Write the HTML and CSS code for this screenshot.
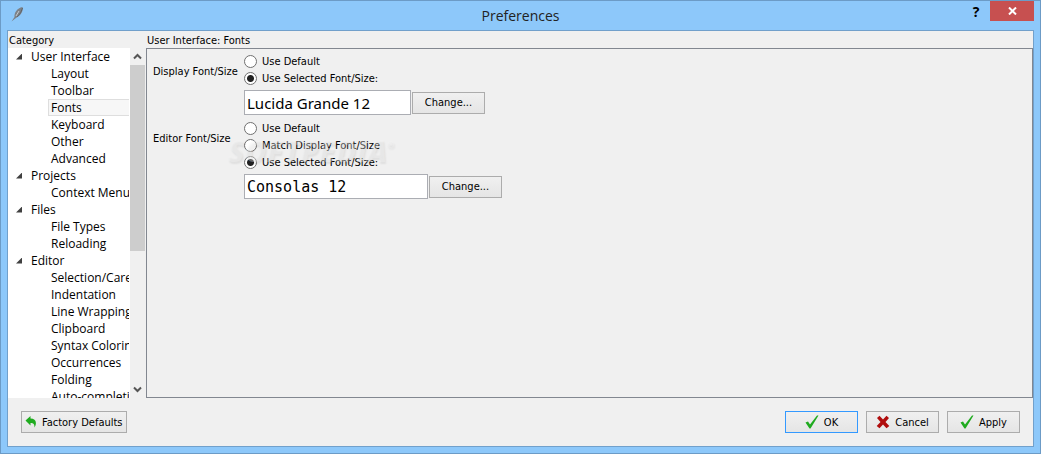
FILE: index.html
```html
<!DOCTYPE html>
<html lang="en">
<head>
    <meta charset="UTF-8">
    <meta name="viewport" content="width=device-width, initial-scale=1.0">
    <title>Preferences</title>
    <link rel="stylesheet" href="styles.css">
</head>
<body>
    <div class="window">
        <header class="titlebar">
            <svg class="app-icon" width="14" height="16" viewBox="0 0 14 16">
                <path d="M0.5 15.5 L3.5 11 C3 7 6 2 11.5 1 C12.5 5 9.5 10 5 12 Z" fill="#7d8288"/>
                <path d="M5 10 L8 5" fill="none" stroke="#c4c9cd" stroke-width="1"/>
                <path d="M6 11 C8 9 10 7 11.5 2" fill="none" stroke="#5d6268" stroke-width="1"/>
            </svg>
            <h1>Preferences</h1>
            <button class="help-button" type="button" aria-label="Help">?</button>
            <button class="close-button" type="button" aria-label="Close">
                <svg width="9" height="8" viewBox="0 0 9 8">
                    <path d="M1 0.5 L8 7.5 M8 0.5 L1 7.5" stroke="#fff" stroke-width="2"/>
                </svg>
            </button>
        </header>

        <form class="client">
            <div class="content">
                <nav class="sidebar">
                    <h2>Category</h2>
                    <div class="tree-box">
                        <ul class="tree">
                            <li>
                                <span class="group">User Interface</span>
                                <ul>
                                    <li><a href="#layout">Layout</a></li>
                                    <li><a href="#toolbar">Toolbar</a></li>
                                    <li><a class="selected" href="#fonts">Fonts</a></li>
                                    <li><a href="#keyboard">Keyboard</a></li>
                                    <li><a href="#other">Other</a></li>
                                    <li><a href="#advanced">Advanced</a></li>
                                </ul>
                            </li>
                            <li>
                                <span class="group">Projects</span>
                                <ul>
                                    <li><a href="#context-menu">Context Menu</a></li>
                                </ul>
                            </li>
                            <li>
                                <span class="group">Files</span>
                                <ul>
                                    <li><a href="#file-types">File Types</a></li>
                                    <li><a href="#reloading">Reloading</a></li>
                                </ul>
                            </li>
                            <li>
                                <span class="group">Editor</span>
                                <ul>
                                    <li><a href="#selection">Selection/Caret</a></li>
                                    <li><a href="#indentation">Indentation</a></li>
                                    <li><a href="#wrapping">Line Wrapping</a></li>
                                    <li><a href="#clipboard">Clipboard</a></li>
                                    <li><a href="#syntax">Syntax Coloring</a></li>
                                    <li><a href="#occurrences">Occurrences</a></li>
                                    <li><a href="#folding">Folding</a></li>
                                    <li><a href="#completion">Auto-completion</a></li>
                                </ul>
                            </li>
                        </ul>
                        <div class="scrollbar">
                            <button type="button" aria-label="Scroll up">
                                <svg width="9" height="7" viewBox="0 0 9 7"><path d="M1 5.5 L4.5 2 L8 5.5" fill="none" stroke="#555" stroke-width="2"/></svg>
                            </button>
                            <div class="track"><div class="thumb"></div></div>
                            <button type="button" aria-label="Scroll down">
                                <svg width="9" height="7" viewBox="0 0 9 7"><path d="M1 1.5 L4.5 5 L8 1.5" fill="none" stroke="#555" stroke-width="2"/></svg>
                            </button>
                        </div>
                    </div>
                </nav>

                <main class="page">
                    <h2>User Interface: Fonts</h2>
                    <div class="panel">
                        <div class="setting" role="group" aria-labelledby="display-label">
                            <span class="setting-name" id="display-label">Display Font/Size</span>
                            <div class="options">
                                <label><input type="radio" name="display">Use Default</label>
                                <label><input type="radio" name="display" checked>Use Selected Font/Size:</label>
                                <div class="font-row">
                                    <input class="font-field display-font" type="text" value="Lucida Grande 12" aria-label="Display font" readonly>
                                    <button class="button" type="button">Change...</button>
                                </div>
                            </div>
                        </div>
                        <div class="setting" role="group" aria-labelledby="editor-label">
                            <span class="setting-name" id="editor-label">Editor Font/Size</span>
                            <div class="options">
                                <label><input type="radio" name="editor">Use Default</label>
                                <label><input type="radio" name="editor">Match Display Font/Size</label>
                                <label><input type="radio" name="editor" checked>Use Selected Font/Size:</label>
                                <div class="font-row">
                                    <input class="font-field editor-font" type="text" value="Consolas 12" aria-label="Editor font" readonly>
                                    <button class="button" type="button">Change...</button>
                                </div>
                            </div>
                        </div>
                        <div class="watermark">SOFTPEDIA<sup>®</sup></div>
                    </div>
                </main>
            </div>

            <footer class="actions">
                <button class="button defaults" type="button">
                    <svg width="12" height="12" viewBox="0 0 12 12">
                        <path d="M0.5 4.5 L5.5 0 V2.5 C10.5 2.5 12.5 6 9.5 11.5 C9.5 8 8.5 7 5.5 7 V9.5 Z" fill="#1fab1f"/>
                    </svg>
                    Factory Defaults
                </button>
                <button class="button primary" type="button">
                    <svg width="14" height="14" viewBox="0 0 14 14"><path d="M0.5 7.5 L3 6.5 L5 9.5 L12 0.5 H13.5 L5.5 13.5 H4.5 Z" fill="#1fab1f"/></svg>
                    OK
                </button>
                <button class="button" type="button">
                    <svg width="14" height="14" viewBox="0 0 14 14"><path d="M1 3 L3.5 0.8 L7 4.5 L10.5 0.8 L13 3 L9.5 7 L13.3 11 L10.5 13.3 L7 9.5 L3.5 13.3 L0.7 11 L4.5 7 Z" fill="#b00d0d"/></svg>
                    Cancel
                </button>
                <button class="button" type="button">
                    <svg width="14" height="14" viewBox="0 0 14 14"><path d="M0.5 7.5 L3 6.5 L5 9.5 L12 0.5 H13.5 L5.5 13.5 H4.5 Z" fill="#1fab1f"/></svg>
                    Apply
                </button>
            </footer>
        </form>
    </div>
</body>
</html>
```
FILE: styles.css
```css
* {
    box-sizing: border-box;
}

body {
    margin: 0;
    font-family: "DejaVu Sans Condensed", "Noto Sans", sans-serif;
    font-size: 11px;
    color: #000;
}

button,
input {
    margin: 0;
    font: inherit;
    color: inherit;
}

h1,
h2 {
    margin: 0;
    font-weight: normal;
}

ul {
    margin: 0;
    padding: 0;
    list-style: none;
}

.window {
    display: flex;
    flex-direction: column;
    height: 100vh;
    padding: 0 6px 6px;
    background-color: #8dc8fa;
    border: 1px solid #6c9bc6;
}

/* Title bar */
.titlebar {
    display: grid;
    grid-template-columns: 72px 1fr 28px 44px;
    align-items: start;
    height: 29px;
}

.app-icon {
    margin: 5px 0 0 4px;
}

.titlebar h1 {
    font-family: "Open Sans", sans-serif;
    font-size: 14px;
    line-height: 29px;
    text-align: center;
    color: #222;
}

.titlebar button {
    padding: 0;
    border: none;
    height: 20px;
}

.help-button {
    background: none;
    font-family: "Open Sans", sans-serif;
    font-size: 14px;
    font-weight: bold;
}

.close-button {
    display: flex;
    align-items: center;
    justify-content: center;
    background-color: #c75050;
}

/* Client area */
.client {
    flex: 1;
    display: flex;
    flex-direction: column;
    min-height: 0;
    background-color: #f0f0f0;
    border: 1px solid #71a0cb;
}

.content {
    flex: 1;
    display: flex;
    min-height: 0;
}

.content h2 {
    height: 17px;
    padding-left: 1px;
    font-size: 11px;
    line-height: 19px;
}

.sidebar {
    display: flex;
    flex-direction: column;
    width: 138px;
}

.tree-box {
    flex: 1;
    display: flex;
    min-height: 0;
    padding-right: 1px;
}

.tree {
    flex: 1;
    min-width: 0;
    padding-right: 1px;
    overflow: hidden;
    background-color: #fff;
    font-family: "Open Sans", sans-serif;
    font-size: 12px;
    line-height: 17px;
    white-space: nowrap;
}

.group {
    display: flex;
    align-items: center;
    gap: 9px;
    padding-left: 8px;
}

.group::before {
    content: "";
    width: 6px;
    height: 6px;
    background-color: #404040;
    clip-path: polygon(100% 0, 100% 100%, 0 100%);
}

.tree a {
    display: block;
    height: 17px;
    margin-left: 40px;
    padding-left: 2px;
    border: 1px solid transparent;
    border-right: none;
    line-height: 15px;
    overflow: hidden;
    color: inherit;
    text-decoration: none;
}

.tree a.selected {
    background-color: #f7f7f7;
    border-color: #dedede;
}

.scrollbar {
    display: flex;
    flex-direction: column;
    width: 15px;
    background-color: #f0f0f0;
}

.scrollbar button {
    display: flex;
    align-items: center;
    justify-content: center;
    height: 17px;
    padding: 0;
    border: none;
    background: none;
}

.track {
    flex: 1;
}

.thumb {
    height: 59%;
    background-color: #cdcdcd;
}

/* Settings page */
.page {
    flex: 1;
    display: flex;
    flex-direction: column;
}

.panel {
    position: relative;
    flex: 1;
    padding: 4px 6px;
    border: 1px solid #828790;
}

.setting {
    display: flex;
    margin-bottom: 5px;
}

.setting-name {
    width: 91px;
    padding-top: 10px;
    line-height: 17px;
}

.options label {
    display: flex;
    align-items: center;
    gap: 5px;
    height: 17px;
}

.options input[type="radio"] {
    appearance: none;
    width: 13px;
    height: 13px;
    border: 1px solid #707070;
    border-radius: 50%;
    background-color: #fff;
}

.options input[type="radio"]:checked {
    background-image: radial-gradient(circle, #222 3px, #fff 4px);
}

.font-row {
    display: flex;
    align-items: center;
    gap: 1px;
    margin-top: 3px;
}

.font-field {
    height: 25px;
    padding: 0 2px;
    border: 1px solid #abadb3;
    background-color: #fff;
}

.display-font {
    width: 167px;
    font-family: "Noto Sans", sans-serif;
    font-size: 15px;
}

.editor-font {
    width: 184px;
    font-family: "DejaVu Sans Mono", monospace;
    font-size: 15px;
}

.watermark {
    position: absolute;
    top: 84px;
    left: 81px;
    font-family: "Open Sans", sans-serif;
    font-size: 30px;
    font-weight: 800;
    font-style: italic;
    line-height: 36px;
    color: rgba(245, 245, 245, 0.35);
    text-shadow: 1px 2px 2px rgba(0, 0, 0, 0.07);
    pointer-events: none;
}

.watermark sup {
    font-size: 9px;
    vertical-align: 14px;
    line-height: 0;
}

/* Buttons */
.button {
    display: flex;
    align-items: center;
    justify-content: center;
    gap: 5px;
    min-width: 73px;
    height: 22px;
    padding: 0 3px;
    border: 1px solid #acacac;
    background: linear-gradient(#f0f0f0, #e5e5e5);
}

.button.primary {
    border-color: #3399ff;
}

.actions {
    display: flex;
    gap: 8px;
    padding: 13px;
}

.defaults {
    margin-right: auto;
}
```
